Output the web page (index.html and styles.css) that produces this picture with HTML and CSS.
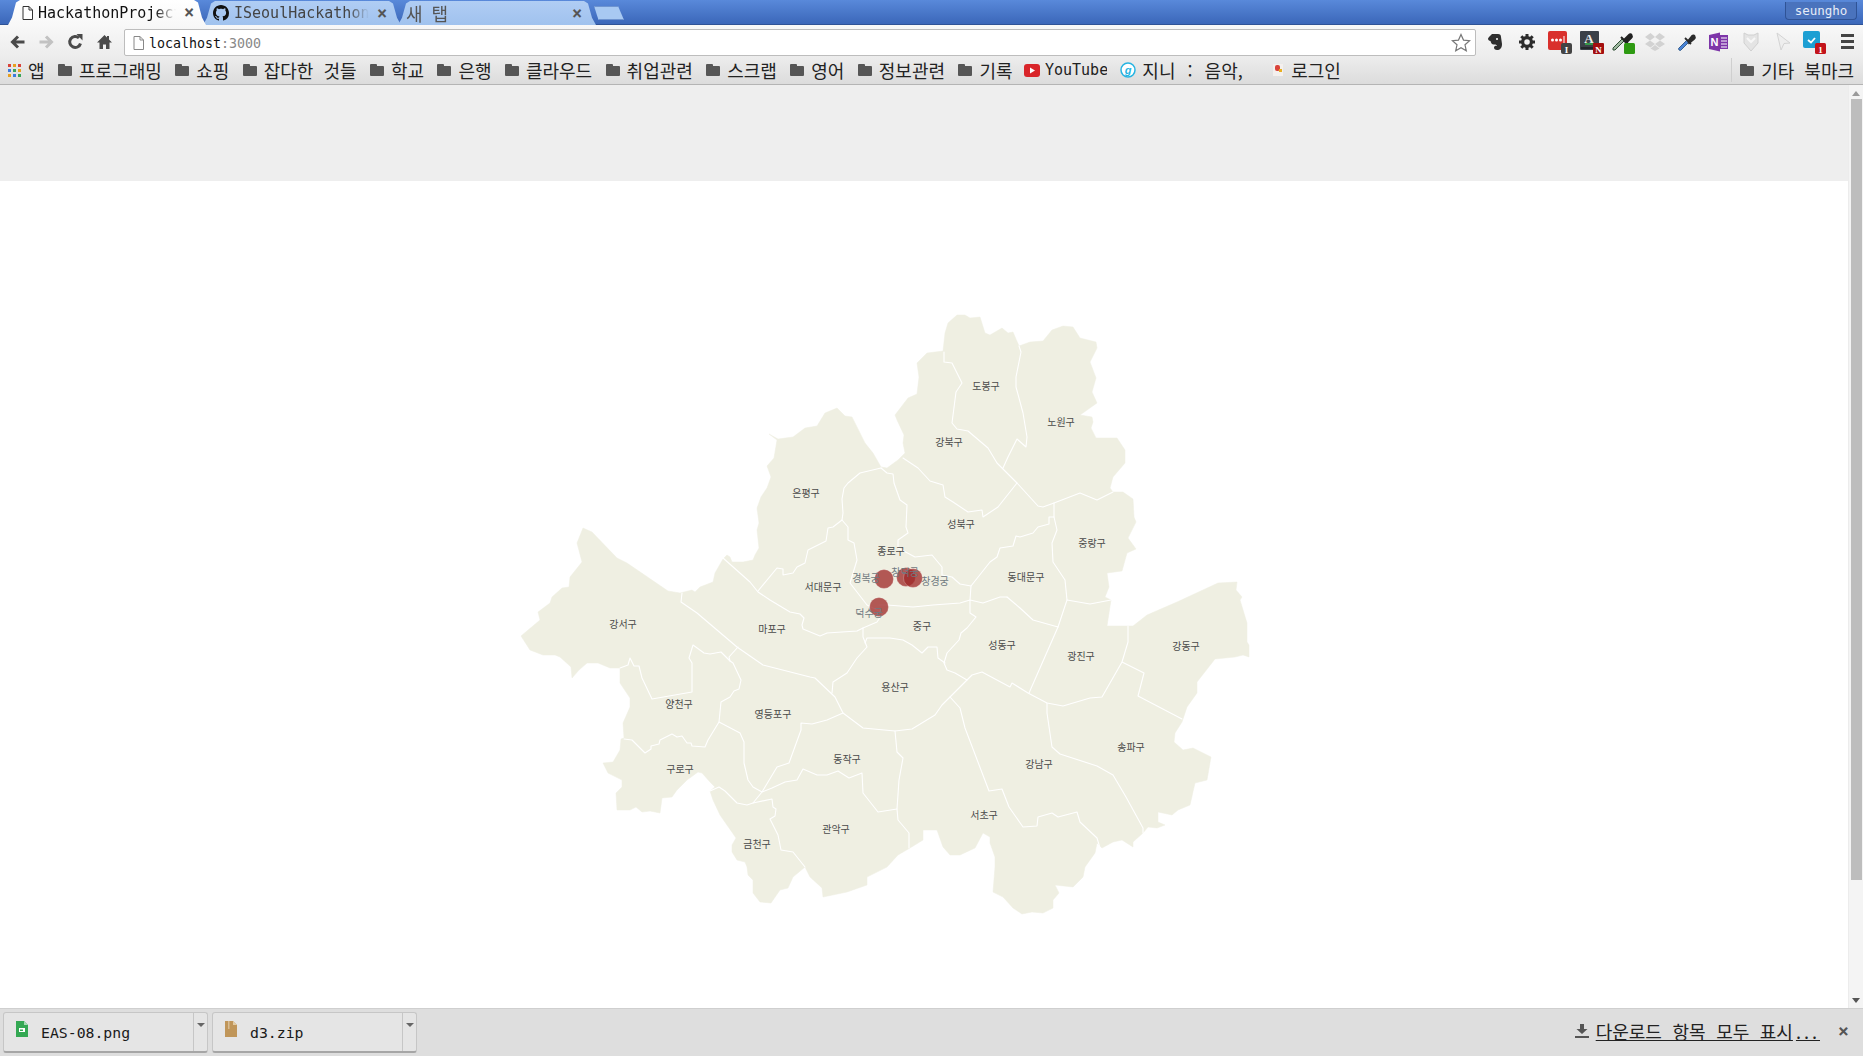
FILE: index.html
```html
<!DOCTYPE html>
<html lang="ko">
<head>
<meta charset="utf-8">
<title>HackathonProject</title>
<link rel="stylesheet" href="styles.css">
</head>
<body>
<header class="titlebar">
  <div class="tab tab-active">
    <svg class="tab-ico" width="11" height="14" viewBox="0 0 11 14"><path d="M1 .5h6l3.5 3.5v9.500h-9.500z" fill="#fff" stroke="#333"/><path d="M7 .5v3.500h3.500" fill="none" stroke="#333"/></svg>
    <span class="tab-title">HackathonProject</span><span class="tab-x">×</span>
  </div>
  <div class="tab">
    <svg class="tab-ico" width="16" height="16" viewBox="0 0 16 16"><path fill="#111" d="M8 0C3.580 0 0 3.580 0 8c0 3.540 2.290 6.530 5.470 7.590.4.070.55-.17.55-.38 0-.19-.01-.82-.01-1.490-2.010.37-2.530-.49-2.690-.94-.09-.23-.48-.94-.82-1.130-.28-.15-.68-.52-.01-.53.63-.01 1.080.58 1.230.82.72 1.210 1.870.87 2.330.66.07-.52.28-.87.51-1.070-1.780-.2-3.640-.89-3.640-3.950 0-.87.31-1.590.82-2.150-.08-.2-.36-1.020.08-2.120 0 0 .67-.21 2.200.82.64-.18 1.320-.27 2-.27.68 0 1.360.09 2 .27 1.530-1.040 2.200-.82 2.200-.82.44 1.100.16 1.920.08 2.120.51.56.82 1.270.82 2.150 0 3.070-1.870 3.750-3.650 3.950.29.25.54.73.54 1.480 0 1.070-.01 1.930-.01 2.200 0 .21.15.46.55.38A8.013 8.013 0 0016 8c0-4.420-3.580-8-8-8z"/></svg>
    <span class="tab-title">ISeoulHackathon/</span><span class="tab-x">×</span>
  </div>
  <div class="tab tab-new">
    <span class="tab-title">새 탭</span><span class="tab-x">×</span>
  </div>
  <div class="newtab"></div>
  <div class="profile">seungho</div>
</header>

<nav class="toolbar">
  <div class="navbtns">
    <svg class="navbtn" width="16" height="16" viewBox="0 0 16 16"><path d="M15 8H4M8.500 2.500 3 8l5.500 5.500" fill="none" stroke="#4a4a4a" stroke-width="3"/></svg>
    <svg class="navbtn" width="16" height="16" viewBox="0 0 16 16"><path d="M1 8h11M7.500 2.500 13 8l-5.500 5.500" fill="none" stroke="#c2c2c2" stroke-width="3"/></svg>
    <svg class="navbtn" width="16" height="16" viewBox="0 0 16 16"><path d="M13 9.500A5.500 5.500 0 1 1 11.500 4" fill="none" stroke="#4a4a4a" stroke-width="3"/><path d="M9 0h6v6.500z" fill="#4a4a4a"/></svg>
    <svg class="navbtn" width="16" height="16" viewBox="0 0 16 16"><path d="M8 1 .5 8.500H3V15h3.500v-4.500h3V15H13V8.500h2.500L12.500 5.500V2h-2v1.500z" fill="#4a4a4a"/></svg>
  </div>
  <div class="omnibox">
    <svg class="omni-page" width="11" height="14" viewBox="0 0 11 14"><path d="M1 .5h6l3.500 3.500v9.500H1z" fill="#fff" stroke="#888"/><path d="M7 .5V4h3.500" fill="none" stroke="#888"/></svg>
    <span class="url">localhost<span class="url-port">:3000</span></span>
    <svg class="star" width="20" height="19" viewBox="0 0 20 19"><path d="M10 1.500l2.500 5.600 6.100.6-4.600 4.100 1.300 6-5.300-3.100-5.300 3.100 1.300-6L1.400 7.700l6.100-.6z" fill="#fff" stroke="#777" stroke-width="1.200"/></svg>
  </div>
  <div class="extensions">
    <span class="ext"><svg width="20" height="20" viewBox="0 0 20 20"><path d="M4 5l3-3h6c2 0 3 1 3 3l1 7c0 4-2 6-5 6-2 0-3-1-3-2.500s2-2 3-1.500c0-1-1-1.500-2.500-1.500C7 13 6 11 5.500 9 4 9 3 8 3 6.500z" fill="#2f2f2f"/><circle cx="12" cy="7" r="1" fill="#fff"/></svg></span>
    <span class="ext"><svg width="18" height="18" viewBox="0 0 18 18"><path d="M9 1v16M1 9h16M3.300 3.300l11.400 11.400M14.700 3.300 3.300 14.700" stroke="#2c2c2c" stroke-width="3"/><circle cx="9" cy="9" r="6" fill="#2c2c2c"/><circle cx="9" cy="9" r="2.800" fill="#f2f2f2"/></svg></span>
    <span class="ext"><svg width="26" height="26" viewBox="0 0 26 26"><rect x="2" y="2" width="19" height="19" rx="2" fill="#d9302c"/><circle cx="6.500" cy="11" r="1.500" fill="#fff"/><circle cx="10.500" cy="11" r="1.500" fill="#fff"/><circle cx="14.500" cy="11" r="1.500" fill="#fff"/><path d="M18 7v8" stroke="#fff"/><path d="M15 21l3-7 3 3z" fill="#333"/><rect x="15" y="14" width="11" height="11" rx="2" fill="#444"/><text x="20.500" y="23.500" class="badge-t">I</text></svg></span>
    <span class="ext"><svg width="26" height="26" viewBox="0 0 26 26"><rect x="2" y="2" width="19" height="19" rx="1" fill="#3b4048"/><text x="11" y="14" class="badge-a">A</text><path d="M7 15h8" stroke="#35b34a" stroke-width="1.500"/><path d="M3 19h17" stroke="#22262b" stroke-width="2"/><rect x="15" y="14" width="11" height="11" rx="1" fill="#a40f0f"/><text x="20.500" y="23.500" class="badge-t">N</text></svg></span>
    <span class="ext"><svg width="26" height="26" viewBox="0 0 26 26"><path d="M3 21l2 0 9-9-2-2-9 9z" fill="#9fb8a0" stroke="#2f4f35"/><path d="M11 8l7 7M14 11l5-5c2-2 4 1 2 3l-5 5z" stroke="#222" stroke-width="2" fill="#222"/><rect x="14" y="14" width="11" height="11" rx="1.500" fill="#2e9a12"/></svg></span>
    <span class="ext"><svg width="20" height="20" viewBox="0 0 20 20" fill="#d2d2d2"><path d="M5.500 1 0 5l5 3.500L10 5zM14.500 1 20 5l-5 3.500L10 5zM0 12l5.500 3.500L10 12 5 8.500zM20 12l-5.500 3.500L10 12l5-3.500z"/><path d="M5.500 16.500 10 19l4.500-2.500L10 13z"/></svg></span>
    <span class="ext"><svg width="20" height="20" viewBox="0 0 20 20"><path d="M2 18l1.500.5 8-8-2-2-8 8z" fill="#4a83d6" stroke="#38618f"/><path d="M8 6l6 6M11 9l4-5c2-2 4 1 2 3l-5 4z" stroke="#2b2b2b" stroke-width="1.800" fill="#2b2b2b"/></svg></span>
    <span class="ext"><svg width="20" height="20" viewBox="0 0 20 20"><path d="M0 3l11-2.500v19L0 17z" fill="#7d35a8"/><rect x="11" y="3" width="8" height="14" fill="#7d35a8"/><path d="M12 6h6M12 9h6M12 12h6M12 15h6" stroke="#fff"/><text x="5.500" y="14" class="badge-n">N</text></svg></span>
    <span class="ext"><svg width="16" height="20" viewBox="0 0 16 20"><path d="M1 1l4 2h6l4-2v10l-7 8-7-8z" fill="#e4e4e4" stroke="#d0d0d0"/><path d="M4 6l4 4 4-4" fill="none" stroke="#f7f7f7" stroke-width="2"/></svg></span>
    <span class="ext"><svg width="18" height="20" viewBox="0 0 18 20"><path d="M3 1l13 10-6 .5L7 18z" fill="#eeeeee" stroke="#d3d3d3"/></svg></span>
    <span class="ext"><svg width="26" height="26" viewBox="0 0 26 26"><rect x="1" y="2" width="17" height="17" rx="2" fill="#1d9fd3"/><path d="M6 11l3 2.500L13 9" fill="none" stroke="#fff" stroke-width="1.800"/><rect x="13" y="14" width="11" height="11" rx="1.500" fill="#c3141b"/><text x="18.500" y="23.500" class="badge-t">1</text></svg></span>
    <span class="ext ext-menu"><i></i><i></i><i></i></span>
  </div>
</nav>

<nav class="bookmarks">
  <div class="bm"><svg class="apps" width="13" height="13" viewBox="0 0 13 13"><rect width="3" height="3" fill="#d9433a"/><rect x="5" width="3" height="3" fill="#e8a020"/><rect x="10" width="3" height="3" fill="#d9433a"/><rect y="5" width="3" height="3" fill="#3c7be0"/><rect x="5" y="5" width="3" height="3" fill="#3ca45a"/><rect x="10" y="5" width="3" height="3" fill="#e8a020"/><rect y="10" width="3" height="3" fill="#e8a020"/><rect x="5" y="10" width="3" height="3" fill="#3c7be0"/><rect x="10" y="10" width="3" height="3" fill="#3ca45a"/></svg><span>앱</span></div>
  <div class="bm"><i class="folder"></i><span>프로그래밍</span></div>
  <div class="bm"><i class="folder"></i><span>쇼핑</span></div>
  <div class="bm"><i class="folder"></i><span>잡다한 것들</span></div>
  <div class="bm"><i class="folder"></i><span>학교</span></div>
  <div class="bm"><i class="folder"></i><span>은행</span></div>
  <div class="bm"><i class="folder"></i><span>클라우드</span></div>
  <div class="bm"><i class="folder"></i><span>취업관련</span></div>
  <div class="bm"><i class="folder"></i><span>스크랩</span></div>
  <div class="bm"><i class="folder"></i><span>영어</span></div>
  <div class="bm"><i class="folder"></i><span>정보관련</span></div>
  <div class="bm"><i class="folder"></i><span>기록</span></div>
  <div class="bm bm-yt"><svg width="16" height="13" viewBox="0 0 16 13"><rect width="16" height="13" rx="3" fill="#d9252a"/><path d="M6 3.500l5 3-5 3z" fill="#fff"/></svg><span class="mono">YouTube</span></div>
  <div class="bm bm-genie"><svg width="16" height="16" viewBox="0 0 16 16"><circle cx="8" cy="8" r="7" fill="#fff" stroke="#27b4e2" stroke-width="1.500"/><text x="8" y="11.500" class="badge-g">g</text></svg><span>지니 : 음악,</span></div>
  <div class="bm bm-login"><svg width="12" height="14" viewBox="0 0 12 14"><rect x="1" y="1" width="10" height="12" fill="#f4f0ee"/><rect x="3" y="2" width="5" height="6" rx="2" fill="#d9433a"/><rect x="7" y="6" width="3" height="3" fill="#e8b020"/></svg><span>로그인</span></div>
  <div class="bm bm-other"><i class="folder"></i><span>기타 북마크</span></div>
</nav>

<main class="viewport">
  <div class="page">
    <div class="band"></div>
    <div class="maparea">
      <svg class="map" width="1848" height="827" viewBox="0 181 1848 827">
        <path class="land" d="M583 528L592 532L617 558L627 563L668 591L680 593L692 590L695 592L700 587L713 582L715 573L723 559L727 555L730 557L732 562L743 562L753 560L755 555L759 548L757 530L759 523L757 508L761 497L767 488L771 477L767 466L774 458L777 440L769 434L778 439L793 437L805 428L817 426L825 413L837 408L845 416L852 417L860 433L865 443L873 453L877 460L881 467L887 468L898 460L905 453L903 443L904 435L897 420L895 415L908 398L917 394L919 377L917 363L927 353L943 351L945 333L948 323L957 315L965 315L970 318L980 317L985 333L990 335L1002 328L1008 333L1013 332L1019 346L1030 342L1043 341L1052 330L1063 326L1073 327L1080 338L1096 342L1097 348L1090 362L1096 378L1092 392L1097 403L1080 415L1092 417L1093 422L1091 428L1096 438L1117 438L1125 450L1125 463L1113 477L1110 488L1113 492L1123 492L1133 499L1134 517L1136 522L1128 538L1136 549L1127 553L1122 571L1107 573L1109 587L1105 597L1111 600L1107 626L1133 626L1147 615L1177 602L1218 583L1237 582L1236 590L1242 597L1240 600L1247 623L1247 642L1249 645L1249 657L1243 655L1235 657L1215 659L1197 682L1197 693L1187 707L1182 722L1175 733L1174 742L1183 750L1193 748L1211 757L1207 780L1195 783L1190 805L1178 810L1172 815L1158 812L1158 822L1165 825L1157 828L1148 827L1143 833L1133 842L1133 847L1122 840L1113 842L1102 848L1097 843L1095 853L1085 867L1083 877L1073 887L1055 885L1059 893L1053 900L1053 908L1043 913L1032 912L1022 914L1013 908L1003 897L993 892L995 867L995 857L990 843L990 837L983 833L975 848L960 855L950 855L943 847L937 830L923 830L923 840L910 848L898 855L887 867L867 877L867 885L847 892L823 897L822 888L810 877L805 867L793 877L788 888L780 890L771 903L760 902L753 893L753 880L748 875L747 867L745 862L737 860L732 852L732 845L736 838L720 815L713 800L710 791L715 787L710 782L702 773L698 772L687 780L677 790L672 797L662 798L660 813L650 811L642 812L636 807L630 810L617 810L616 793L622 787L622 780L608 773L603 763L613 762L620 750L621 739L624 738L623 723L630 707L630 698L620 683L620 668L610 668L598 663L587 663L579 670L572 678L571 667L560 657L555 655L543 655L530 650L521 636L540 620L538 612L550 603L552 597L562 588L569 587L570 577L582 562L577 543Z"/>
        <path class="border" d="M682 593L681 602L697 613L737 647L763 665L810 677L815 678L835 697L843 713L863 728L895 731L912 729L935 715L942 705L950 697L972 675L982 672L1010 687L1012 683L1028 693L1047 703L1063 706L1090 698L1102 697L1122 662L1128 642L1128 626"/>
        <path class="border" d="M1122 662L1144 673L1138 696L1182 719"/>
        <path class="border" d="M1047 703L1047 713L1052 747L1060 754L1097 766L1113 775L1126 797L1143 828L1143 833"/>
        <path class="border" d="M950 697L960 708L965 728L989 791L1002 789L1009 807L1023 827L1037 826L1038 817L1052 813L1058 817L1077 812L1080 822L1097 838L1100 848"/>
        <path class="border" d="M1058 627L1029 693"/>
        <path class="border" d="M1007 597L1020 608L1033 620L1058 627L1067 600L1090 604L1111 600"/>
        <path class="border" d="M1054 503L1054 517L1057 530L1052 543L1053 562L1065 580L1067 600"/>
        <path class="border" d="M1054 517L1049 517L1049 524L1038 527L1033 533L1020 537L1016 536L1013 546L1000 548L997 557L990 562L971 586L970 600L970 613L976 617L967 628L961 633L959 640L947 653L944 663L947 670L955 673L967 680"/>
        <path class="border" d="M879 605L887 605L913 607L933 605L960 603L970 600L983 603L1000 597L1007 597"/>
        <path class="border" d="M881 468L860 473L848 483L844 488L842 499L843 513L842 520L833 527L828 528L826 541L808 550L805 563L797 567L793 573L783 575L783 569L777 568L758 591"/>
        <path class="border" d="M723 558L750 582L758 592L770 600L790 612L800 614L804 618L802 625L803 629L820 636L827 633L857 631L863 628L863 637L867 647L857 658L847 673L833 682L832 693"/>
        <path class="border" d="M865 643L867 638L890 638L903 640L912 645L922 653L928 647L937 647L938 658L945 663"/>
        <path class="border" d="M863 628L877 622L883 613L867 605L850 583L857 560L854 543L848 540L848 527L842 520"/>
        <path class="border" d="M881 468L887 473L893 474L894 483L900 500L907 505L906 527L908 533L898 540L898 548L915 557L932 555L942 567L942 575L952 577L960 584L971 586"/>
        <path class="border" d="M903 458L918 468L930 481L943 485L945 497L953 502L968 512L982 510L983 517L998 507L1017 483"/>
        <path class="border" d="M944 352L944 362L952 363L962 383L956 392L952 423L957 429L968 431L988 448L997 463L1017 483L1038 506L1043 507L1054 503L1080 493L1097 500L1113 492"/>
        <path class="border" d="M1019 346L1021 352L1016 377L1016 387L1023 413L1027 437L1026 447L1017 439L1008 457L1003 468"/>
        <path class="border" d="M620 668L628 665L630 658L634 666L639 666L642 678L652 699L692 692L692 663L689 658L693 645L704 653L710 654L721 652L730 661L733 663L741 680L739 689L734 691L730 697L721 702L719 722"/>
        <path class="border" d="M738 647L729 657L730 661"/>
        <path class="border" d="M624 739L632 740L645 753L651 749L651 746L659 744L660 740L672 734L677 737L682 736L687 743L691 743L692 746L705 747L708 740L719 722L740 733L744 742L744 763L748 780L753 787L762 792L777 767L789 763L801 730L801 723L812 724L827 720L843 713"/>
        <path class="border" d="M753 803L762 792L772 788L785 782L797 780L803 769L817 775L827 775L838 771L849 778L862 773L863 793L878 812L897 809"/>
        <path class="border" d="M710 791L719 787L725 791L737 803L747 805L753 803L772 799L773 807L776 809L775 816L770 819L778 835L781 850L793 852L805 867"/>
        <path class="border" d="M895 731L897 752L903 758L899 780L897 809L898 820L909 833L909 848"/>
        <g class="labels">
          <text x="986" y="386">도봉구</text><text x="1061" y="422">노원구</text><text x="949" y="442">강북구</text>
          <text x="961" y="524">성북구</text><text x="1092" y="543">중랑구</text><text x="1026" y="577">동대문구</text>
          <text x="806" y="493">은평구</text><text x="891" y="551">종로구</text><text x="823" y="587">서대문구</text>
          <text x="623" y="624">강서구</text><text x="772" y="629">마포구</text><text x="679" y="704">양천구</text>
          <text x="773" y="714">영등포구</text><text x="680" y="769">구로구</text><text x="847" y="759">동작구</text>
          <text x="757" y="844">금천구</text><text x="836" y="829">관악구</text><text x="895" y="687">용산구</text>
          <text x="922" y="626">중구</text><text x="1002" y="645">성동구</text><text x="1081" y="656">광진구</text>
          <text x="1186" y="646">강동구</text><text x="1131" y="747">송파구</text><text x="1039" y="764">강남구</text>
          <text x="984" y="815">서초구</text>
        </g>
        <g class="markers">
          <circle cx="884" cy="579" r="9.500"/><circle cx="906" cy="577" r="9.500"/><circle cx="913" cy="578" r="9.500"/><circle cx="879" cy="607" r="9.500"/>
        </g>
        <g class="palaces">
          <text x="866" y="578">경복궁</text><text x="905" y="572">창덕궁</text><text x="935" y="581">창경궁</text><text x="869" y="613">덕수궁</text>
        </g>
      </svg>
    </div>
  </div>
  <aside class="scrollbar"><i class="arrow-up"></i><div class="thumb"></div><i class="arrow-down"></i></aside>
</main>

<footer class="shelf">
  <div class="dl">
    <div class="dl-main"><svg width="12" height="16" viewBox="0 0 12 16"><path d="M0 0h8l4 4v12H0z" fill="#34a853"/><path d="M8 0v4h4z" fill="#a5dbb5"/><rect x="3" y="7" width="6" height="4" fill="#fff"/><rect x="4" y="8.500" width="3" height="1.500" fill="#34a853"/></svg><span>EAS-08.png</span></div>
    <div class="dl-drop"><i></i></div>
  </div>
  <div class="dl">
    <div class="dl-main"><svg width="12" height="16" viewBox="0 0 12 16"><path d="M0 0h8l4 4v12H0z" fill="#c0965a"/><path d="M8 0v4h4z" fill="#e2cca6"/><path d="M3 1h1.500M3 3h1.500M3 5h1.500M3 7h1.500" stroke="#f0e4cf"/></svg><span>d3.zip</span></div>
    <div class="dl-drop"><i></i></div>
  </div>
  <div class="showall">
    <svg width="14" height="14" viewBox="0 0 14 14"><path d="M5 0h4v5h3.500L7 10 1.500 5H5z" fill="#555"/><rect y="12" width="14" height="2" fill="#555"/></svg>
    <span class="showall-link">다운로드 항목 모두 표시<span class="dots">...</span></span>
  </div>
  <span class="shelf-x">×</span>
</footer>
</body>
</html>
```
FILE: styles.css
```css
* { box-sizing: border-box; }
html, body { height: 100%; }
body {
  margin: 0;
  height: 100vh;
  overflow: hidden;
  display: flex;
  flex-direction: column;
  background: #fff;
  font-family: "DejaVu Sans Mono", "Noto Sans CJK KR", monospace;
  font-size: 15px;
  color: #111;
}

/* title bar + tabs */
.titlebar {
  height: 25px;
  flex: none;
  display: flex;
  align-items: flex-end;
  padding-left: 8px;
  background: linear-gradient(#5989da, #3b67b9);
  border-bottom: 1px solid #2f5396;
}
.tab {
  width: 198px;
  height: 24px;
  margin-bottom: -1px;
  margin-right: -3px;
  padding: 0 12px 0 10px;
  display: flex;
  align-items: center;
  background: linear-gradient(#b0cdf4, #a0c2ee);
  clip-path: polygon(0 100%, 4px 70%, 8px 10%, 12px 0, calc(100% - 12px) 0, calc(100% - 8px) 10%, calc(100% - 4px) 70%, 100% 100%);
  color: #444;
}
.tab-active {
  background: linear-gradient(#fff, #f8f8f8);
  color: #111;
  height: 25px;
  padding: 0 10px 0 14px;
  position: relative;
  z-index: 1;
}
.tab-new { padding-left: 8px; }
.tab-ico { flex: none; margin-right: 5px; }
.tab-title {
  flex: 1;
  min-width: 0;
  margin-right: 6px;
  overflow: hidden;
  white-space: nowrap;
  -webkit-mask-image: linear-gradient(to right, #000 85%, transparent);
  mask-image: linear-gradient(to right, #000 85%, transparent);
}
.tab-new .tab-title { font-size: 18px; word-spacing: 4px; color: #555; font-family: "Noto Sans CJK KR", sans-serif; }
.tab-x { flex: none; width: 14px; text-align: center; color: #555; font-size: 17px; font-weight: bold; line-height: 1; }
.newtab {
  width: 30px;
  height: 14px;
  margin: 0 0 4px 1px;
  background: #a8c9f2;
  border: 1px solid #6e94d0;
  clip-path: polygon(0 0, 80% 0, 100% 100%, 15% 100%);
}
.profile {
  margin: 0 6px 4px auto;
  height: 18px;
  width: 72px;
  text-align: center;
  line-height: 17px;
  font-size: 12.5px;
  color: #e6ecf7;
  background: #4a73bd;
  border: 1px solid #2f5396;
  border-top: 0;
  border-radius: 0 0 4px 4px;
}

/* toolbar */
.toolbar {
  height: 33px;
  flex: none;
  display: flex;
  align-items: center;
  background: linear-gradient(#f8f8f8, #ececec);
}
.navbtns { width: 120px; padding-left: 3px; display: flex; flex: none; }
.navbtn { width: 29px; flex: none; }
.omnibox {
  flex: none;
  width: 1352px;
  margin-left: 4px;
  height: 27px;
  margin-top: 2px;
  display: flex;
  align-items: center;
  padding: 0 4px 0 8px;
  background: #fff;
  border: 1px solid #bdbdbd;
  border-radius: 2px;
}
.omni-page { margin-right: 5px; flex: none; }
.url { flex: 1; font-size: 13.3px; color: #111; padding-top: 2px; }
.url-port { color: #888; }
.extensions {
  flex: none;
  width: 384px;
  margin-left: 3px;
  display: grid;
  grid-template-columns: repeat(12, 32px);
  align-items: center;
}
.ext { display: flex; justify-content: center; align-items: center; height: 28px; }
.ext svg { display: block; }
.ext-menu { flex-direction: column; gap: 3px; }
.ext-menu i { display: block; width: 13px; height: 3px; background: #444; }
.badge-t { font: bold 9px "Liberation Serif", serif; fill: #fff; text-anchor: middle; }
.badge-a { font: bold 13px "Liberation Serif", serif; fill: #eee; text-anchor: middle; }
.badge-n { font: bold 11px "Liberation Sans", sans-serif; fill: #fff; text-anchor: middle; }
.badge-g { font: italic bold 11px "Liberation Sans", sans-serif; fill: #27b4e2; text-anchor: middle; }

/* bookmarks */
.bookmarks {
  height: 27px;
  flex: none;
  display: flex;
  align-items: center;
  gap: 13.4px;
  padding: 0 0 2px 8px;
  background: linear-gradient(#ececec, #dcdcdc);
  border-bottom: 1px solid #b4b4b4;
  font-family: "Noto Sans CJK KR", sans-serif;
  font-size: 18px;
  word-spacing: 5px;
  color: #222;
}
.bm { display: flex; align-items: center; gap: 7px; white-space: nowrap; line-height: 24px; }
.bm .mono { font: 15px "DejaVu Sans Mono", monospace; }
.bm-yt { gap: 5px; margin-left: -2px; }
.bm-yt span { width: 62px; overflow: hidden; }
.bm-genie { gap: 6px; word-spacing: 7px; }
.bm-login { margin-left: 16px; }
.bm-other { margin-left: auto; margin-right: 9px; padding-left: 8px; border-left: 1px solid #cfcfcf; }
.folder {
  display: block;
  position: relative;
  width: 14px;
  height: 10px;
  margin-top: 2px;
  background: #565656;
  border-radius: 1px;
}
.folder::before {
  content: "";
  position: absolute;
  left: 0;
  top: -2px;
  width: 7px;
  height: 3px;
  background: #565656;
  border-radius: 1px 1px 0 0;
}

/* page */
.viewport { flex: 1; min-height: 0; display: flex; }
.page { flex: 1; min-width: 0; display: flex; flex-direction: column; }
.band { height: 96px; flex: none; background: #eee; }
.maparea { flex: 1; min-height: 0; }
.map { display: block; }
.land { fill: #efefe2; stroke: #efefe2; stroke-width: 0.5; stroke-linejoin: round; }
.border { fill: none; stroke: #fff; stroke-width: 1.1; stroke-linejoin: round; stroke-linecap: round; }
.labels, .palaces { transform: translateY(1px); }
.labels text, .palaces text {
  font-family: "Noto Sans CJK KR", sans-serif;
  font-size: 10px;
  text-anchor: middle;
  dominant-baseline: middle;
}
.labels text { fill: #4a4a4a; }
.palaces text { fill: #6f7a80; }
.markers circle { fill: #9f2a2a; fill-opacity: 0.77; stroke: #fff; stroke-opacity: 0.4; stroke-width: 0.6; }

.scrollbar {
  width: 15px;
  flex: none;
  display: flex;
  flex-direction: column;
  align-items: center;
  padding: 6px 0 5px;
  background: #f4f4f4;
  border-left: 1px solid #ececec;
}
.thumb { width: 11px; height: 781px; margin-top: 3px; background: #bdbdbd; }
.arrow-up, .arrow-down { display: block; width: 0; height: 0; border-left: 4px solid transparent; border-right: 4px solid transparent; }
.arrow-up { border-bottom: 5px solid #9a9a9a; }
.arrow-down { margin-top: auto; border-top: 5px solid #555; }

/* download shelf */
.shelf {
  height: 48px;
  flex: none;
  display: flex;
  align-items: center;
  gap: 4px;
  padding: 0 0 1px 3px;
  background: #dedede;
  border-top: 1px solid #cfcfcf;
}
.dl {
  width: 205px;
  height: 41px;
  display: flex;
  background: #e5e5e5;
  border: 1px solid #c6c6c6;
  border-bottom: 2px solid #a6a6a6;
  border-radius: 3px;
}
.dl-main { flex: 1; display: flex; align-items: flex-start; padding: 7px 0 0 12px; gap: 13px; }
.dl-main svg { margin-top: 1px; }
.dl-main span { font-size: 14.8px; line-height: 25px; color: #1a1a1a; }
.dl-drop { width: 14px; border-left: 1px solid #c6c6c6; padding: 10px 0 0 3px; }
.dl-drop i { display: block; width: 0; height: 0; border-left: 4px solid transparent; border-right: 4px solid transparent; border-top: 4px solid #666; }
.showall { margin-left: auto; padding-bottom: 3px; display: flex; align-items: center; gap: 7px; }
.showall-link {
  font-family: "Noto Sans CJK KR", sans-serif;
  font-size: 18px;
  word-spacing: 5.5px;
  line-height: 22px;
  color: #222;
  text-decoration: underline;
  text-underline-offset: 1px;
}
.dots { letter-spacing: 3px; padding-left: 3px; }
.shelf-x { width: 39px; text-align: center; font-size: 18px; font-weight: bold; color: #555; padding-bottom: 3px; }
```
